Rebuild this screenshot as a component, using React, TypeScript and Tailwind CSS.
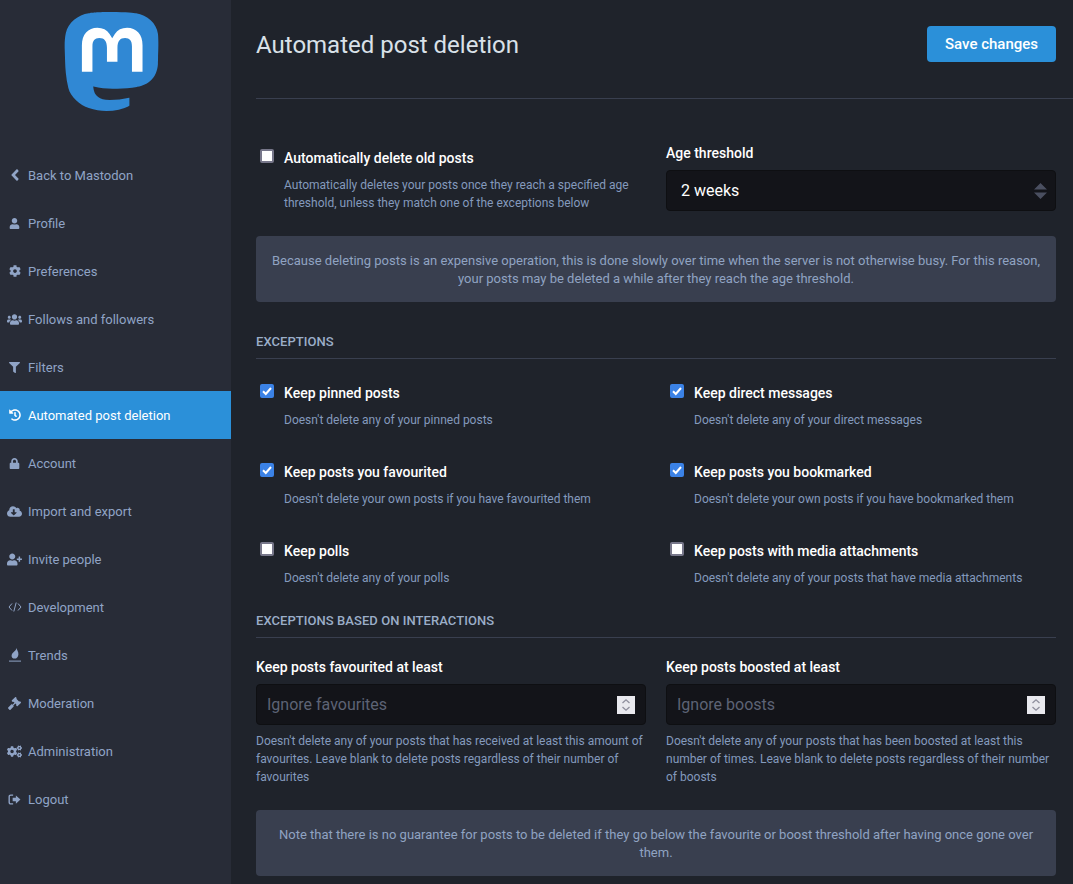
import React from 'react';
import {
  FaAngleLeft, FaUser, FaCog, FaUsers, FaFilter, FaHistory, FaLock,
  FaCloudDownloadAlt, FaUserPlus, FaGavel, FaCogs,
} from 'react-icons/fa';

const MASTODON =
  'M23.268 5.313c-.35-2.578-2.617-4.61-5.304-5.004C17.51.242 15.792 0 11.813 0h-.03c-3.98 0-4.835.242-5.288.309C3.882.692 1.496 2.518.917 5.127.64 6.412.61 7.837.661 9.143c.074 1.874.088 3.745.26 5.611.118 1.24.325 2.47.62 3.68.55 2.237 2.777 4.098 4.96 4.857 2.336.792 4.849.923 7.256.38.265-.061.527-.132.786-.213.585-.184 1.27-.39 1.774-.753a.057.057 0 0 0 .023-.043v-1.809a.052.052 0 0 0-.02-.041.053.053 0 0 0-.046-.01 20.282 20.282 0 0 1-4.709.545c-2.73 0-3.463-1.284-3.674-1.818a5.593 5.593 0 0 1-.319-1.433.053.053 0 0 1 .066-.054c1.517.363 3.072.546 4.632.546.376 0 .75 0 1.125-.01 1.57-.044 3.224-.124 4.768-.422.038-.008.077-.015.11-.024 2.435-.464 4.753-1.92 4.989-5.604.008-.145.03-1.52.03-1.67.002-.512.167-3.63-.024-5.545zm-3.748 9.195h-2.561V8.29c0-1.309-.55-1.976-1.67-1.976-1.23 0-1.846.79-1.846 2.35v3.403h-2.546V8.663c0-1.56-.617-2.35-1.848-2.35-1.112 0-1.668.668-1.67 1.977v6.218H4.822V8.102c0-1.31.337-2.35 1.011-3.12.696-.77 1.608-1.164 2.74-1.164 1.311 0 2.302.5 2.962 1.498l.638 1.06.638-1.06c.66-.999 1.65-1.498 2.96-1.498 1.13 0 2.043.395 2.74 1.164.675.77 1.012 1.81 1.012 3.12z';

const CodeIcon = () => (
  <svg viewBox="0 0 14 10" className="w-[14px] h-[10px] block" fill="none" stroke="currentColor" strokeWidth="1">
    <path d="M4 1.5 1 5l3 3.5M10 1.5 13 5l-3 3.5M8.2.5 5.8 9.5" />
  </svg>
);

const TrendsIcon = () => (
  <svg viewBox="0 0 12 14" className="w-[12px] h-[14px] block" fill="currentColor">
    <path d="M7.6 0C7.8 2.2 9.6 3.6 9.4 6.4 9.2 9 7.6 10.6 5.6 10.6c-2 0-3.2-1.4-3-3.2C2.8 5.6 4 5 5 3.8 6 2.8 7.2 1.8 7.6 0z" />
    <rect x="0" y="12.6" width="12" height="1" />
  </svg>
);

const LogoutIcon = () => (
  <svg viewBox="0 0 14 12" className="w-[13px] h-[11px] block" fill="currentColor">
    <path d="M5.5 1.2H3A1.7 1.7 0 0 0 1.2 3v6A1.7 1.7 0 0 0 3 10.8h2.5" fill="none" stroke="currentColor" strokeWidth="1.5" />
    <path d="M5 4h3.5V1.5L13.5 6l-5 4.5V8H5z" />
  </svg>
);

const navItems: { label: string; icon: React.ReactNode; active?: boolean }[] = [
  { label: 'Back to Mastodon', icon: <FaAngleLeft size={18} className="block" /> },
  { label: 'Profile', icon: <FaUser size={11} className="block" /> },
  { label: 'Preferences', icon: <FaCog size={12} className="block" /> },
  { label: 'Follows and followers', icon: <FaUsers size={15} className="block" /> },
  { label: 'Filters', icon: <FaFilter size={11} className="block" /> },
  { label: 'Automated post deletion', icon: <FaHistory size={12} className="block" />, active: true },
  { label: 'Account', icon: <FaLock size={11} className="block" /> },
  { label: 'Import and export', icon: <FaCloudDownloadAlt size={15} className="block" /> },
  { label: 'Invite people', icon: <FaUserPlus size={15} className="block" /> },
  { label: 'Development', icon: <CodeIcon /> },
  { label: 'Trends', icon: <TrendsIcon /> },
  { label: 'Moderation', icon: <FaGavel size={13} className="block" /> },
  { label: 'Administration', icon: <FaCogs size={15} className="block" /> },
  { label: 'Logout', icon: <LogoutIcon /> },
];

const exceptionRows = [
  [
    { label: 'Keep pinned posts', hint: "Doesn't delete any of your pinned posts", checked: true },
    { label: 'Keep direct messages', hint: "Doesn't delete any of your direct messages", checked: true },
  ],
  [
    { label: 'Keep posts you favourited', hint: "Doesn't delete your own posts if you have favourited them", checked: true },
    { label: 'Keep posts you bookmarked', hint: "Doesn't delete your own posts if you have bookmarked them", checked: true },
  ],
  [
    { label: 'Keep polls', hint: "Doesn't delete any of your polls", checked: false },
    { label: 'Keep posts with media attachments', hint: "Doesn't delete any of your posts that have media attachments", checked: false },
  ],
];

const Logo = () => (
  <svg viewBox="0 0 24 24" className="w-[99px] h-[99px] block">
    <rect x="4.6" y="3.6" width="15.2" height="11.2" fill="#ffffff" />
    <path d={MASTODON} fill="#3088d4" />
  </svg>
);

const CheckItem = ({ label, hint, checked }: { label: string; hint: string; checked: boolean }) => (
  <label className="flex items-start">
    <span className="relative w-[14px] h-[14px] mt-[1px] ml-[4px] mr-[10px] shrink-0">
      <input
        type="checkbox"
        defaultChecked={checked}
        className="block w-[14px] h-[14px] appearance-none rounded-[2px] border-2 border-[#77778a] bg-white checked:border-[#3b82e6] checked:bg-[#3b82e6]"
      />
      {/* tick sits over the box */}
      {checked && (
        <svg viewBox="0 0 14 14" className="absolute left-0 top-0 w-[14px] h-[14px]" fill="none" stroke="#ffffff" strokeWidth="2">
          <path d="M3 7.2 5.8 10 11 4" />
        </svg>
      )}
    </span>
    <div className="min-w-0">
      <div className="text-[14px] leading-[20px] font-medium text-white">{label}</div>
      <div className="mt-[8px] text-[12px] leading-[18px] text-[#849abd]">{hint}</div>
    </div>
  </label>
);

const SectionTitle = ({ children }: { children: React.ReactNode }) => (
  <h4 className="text-[13px] leading-[18px] font-medium uppercase tracking-[0.06px] text-[#9baec8] pt-[1px] pb-[7px] border-b border-[#393f4f]">
    {children}
  </h4>
);

const Notice = ({ children }: { children: React.ReactNode }) => (
  <div className="h-[66px] rounded-[4px] bg-[#393f4f] px-[16px] pt-[2px] flex items-center justify-center text-center text-[13px] leading-[18px] text-[#90a3c2]">
    <p>{children}</p>
  </div>
);

const NumberField = ({ label, placeholder, hint }: { label: string; placeholder: string; hint: string }) => (
  <div>
    <div className="text-[14px] leading-[20px] font-medium text-white">{label}</div>
    <div className="mt-[7px] h-[41px] flex items-center rounded-[4px] border border-[#0e0f12] bg-[#131419] pl-[10px] pr-[10px]">
      <input
        placeholder={placeholder}
        className="flex-1 min-w-0 bg-transparent text-[16px] outline-none placeholder:text-[#5d6375]"
      />
      <div className="w-[18px] h-[18px] bg-[#e9e9ee] flex items-center justify-center">
        <svg viewBox="0 0 18 18" className="w-[18px] h-[18px]" fill="none" stroke="#8f8f9d" strokeWidth="1.3">
          <path d="M5.5 7 9 3.8 12.5 7M5.5 11 9 14.2 12.5 11" />
        </svg>
      </div>
    </div>
    <p className="mt-[7px] text-[12px] leading-[18px] text-[#849abd]">{hint}</p>
  </div>
);

export default function App() {
  return (
    <div className="flex h-[884px] w-[1073px] overflow-hidden bg-[#1f232b] font-['Roboto',sans-serif]">
      {/* sidebar */}
      <aside className="w-[231px] shrink-0 bg-[#282c37]">
        <div className="h-[151px] pl-[61.5px] pt-[12px]">
          <Logo />
        </div>
        <nav>
          {navItems.map((item) => (
            <a
              key={item.label}
              className={`flex h-[48px] items-center text-[13px] ${item.active ? 'bg-[#2b90d9] text-white' : 'text-[#90a4c6]'}`}
            >
              <span className="w-[28px] shrink-0 flex justify-center pl-[1px]">{item.icon}</span>
              <span className="pt-[2px]">{item.label}</span>
            </a>
          ))}
        </nav>
      </aside>

      {/* main column */}
      <main className="flex-1 min-w-0 pl-[25px]">
        <header className="h-[99px] pt-[26px] pr-[2px] border-b border-[#393f4f]">
          <div className="flex items-start justify-between pr-[15px]">
            <h2 className="pt-[1px] text-[24px] leading-[36px] font-normal text-[#d9e1e8]">Automated post deletion</h2>
            <button className="h-[36px] w-[129px] rounded-[4px] bg-[#2b90d9] text-[15px] font-medium text-white">
              Save changes
            </button>
          </div>
        </header>

        <div className="pr-[17px]">
          <div className="grid grid-cols-2 gap-x-[20px] pt-[49px] h-[137px]">
            <CheckItem
              label="Automatically delete old posts"
              hint="Automatically deletes your posts once they reach a specified age threshold, unless they match one of the exceptions below"
              checked={false}
            />
            <div className="-mt-[5px]">
              <div className="text-[14px] leading-[20px] font-medium text-white">Age threshold</div>
              <div className="mt-[7px] h-[41px] flex items-center justify-between rounded-[4px] border border-[#0e0f12] bg-[#131419] pl-[14px] pr-[8px]">
                <span className="text-[16px] text-white">2 weeks</span>
                <svg viewBox="0 0 13 16" className="w-[13px] h-[16px]" fill="#4a4f60">
                  <path d="M6.5 0 13 6.5H0zM0 9.5h13L6.5 16z" />
                </svg>
              </div>
            </div>
          </div>

          <Notice>
            Because deleting posts is an expensive operation, this is done slowly over time when the server is not otherwise busy. For this reason, your posts may be deleted a while after they reach the age threshold.
          </Notice>

          <div className="mt-[30px]">
            <SectionTitle>Exceptions</SectionTitle>
          </div>
          <div className="mt-[24px]">
            {exceptionRows.map((row) => (
              <div key={row[0].label} className="grid grid-cols-2 gap-x-[20px] h-[79px]">
                {row.map((c) => (
                  <CheckItem key={c.label} {...c} />
                ))}
              </div>
            ))}
          </div>

          <div className="mt-[-9px]">
            <SectionTitle>Exceptions based on interactions</SectionTitle>
          </div>
          <div className="grid grid-cols-2 gap-x-[20px] mt-[19px] h-[125px]">
            <NumberField
              label="Keep posts favourited at least"
              placeholder="Ignore favourites"
              hint="Doesn't delete any of your posts that has received at least this amount of favourites. Leave blank to delete posts regardless of their number of favourites"
            />
            <NumberField
              label="Keep posts boosted at least"
              placeholder="Ignore boosts"
              hint="Doesn't delete any of your posts that has been boosted at least this number of times. Leave blank to delete posts regardless of their number of boosts"
            />
          </div>
          <div className="mt-[28px]">
            <Notice>
              Note that there is no guarantee for posts to be deleted if they go below the favourite or boost threshold after having once gone over them.
            </Notice>
          </div>
        </div>
      </main>
    </div>
  );
}
